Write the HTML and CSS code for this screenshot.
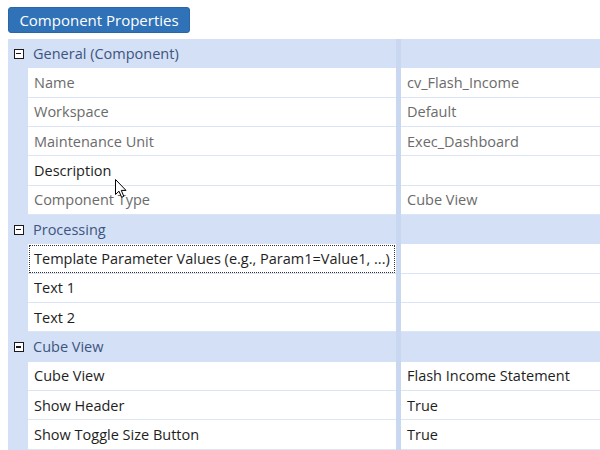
FILE: index.html
```html
<!DOCTYPE html>
<html>
<head>
<meta charset="utf-8">
<link rel="stylesheet" href="styles.css">
</head>
<body>
<div class="page">
  <div class="toolbar"><button class="title-btn">Component Properties</button></div>
  <div class="grid">
    <div class="row cat"><span class="toggle"><span class="minus"></span></span><span class="cat-label">General (Component)</span><span class="div"></span><span class="cat-fill"></span></div>
    <div class="row item"><span class="gut"></span><span class="name ro">Name</span><span class="div"></span><span class="val ro">cv_Flash_Income</span></div>
    <div class="row item"><span class="gut"></span><span class="name ro">Workspace</span><span class="div"></span><span class="val ro">Default</span></div>
    <div class="row item"><span class="gut"></span><span class="name ro">Maintenance Unit</span><span class="div"></span><span class="val ro">Exec_Dashboard</span></div>
    <div class="row item"><span class="gut"></span><span class="name">Description</span><span class="div"></span><span class="val"></span></div>
    <div class="row item"><span class="gut"></span><span class="name ro">Component Type</span><span class="div"></span><span class="val ro">Cube View</span></div>
    <div class="row cat"><span class="toggle"><span class="minus"></span></span><span class="cat-label">Processing</span><span class="div"></span><span class="cat-fill"></span></div>
    <div class="row item"><span class="gut"></span><span class="name focus">Template Parameter Values (e.g., Param1=Value1, ...)</span><span class="div"></span><span class="val"></span></div>
    <div class="row item"><span class="gut"></span><span class="name">Text 1</span><span class="div"></span><span class="val"></span></div>
    <div class="row item"><span class="gut"></span><span class="name">Text 2</span><span class="div"></span><span class="val"></span></div>
    <div class="row cat"><span class="toggle"><span class="minus"></span></span><span class="cat-label">Cube View</span><span class="div"></span><span class="cat-fill"></span></div>
    <div class="row item"><span class="gut"></span><span class="name">Cube View</span><span class="div"></span><span class="val">Flash Income Statement</span></div>
    <div class="row item"><span class="gut"></span><span class="name">Show Header</span><span class="div"></span><span class="val">True</span></div>
    <div class="row item"><span class="gut"></span><span class="name">Show Toggle Size Button</span><span class="div"></span><span class="val">True</span></div>
  </div>
  <svg class="cursor" width="13" height="20" viewBox="0 0 13 20"><path d="M0.5 0.5 L0.5 15.5 L4 12.2 L6.6 18.3 L8.8 17.4 L6.3 11.4 L11 11.4 Z" fill="#fff" stroke="#000" stroke-width="1" stroke-linejoin="miter"/></svg>
</div>
</body>
</html>
```
FILE: styles.css
```css
html, body {
  margin: 0;
  padding: 0;
  background: #ffffff;
  overflow: hidden;
}
body {
  font-family: "Open Sans", "Noto Sans", sans-serif;
  font-size: 14.5px;
}
.page {
  position: relative;
  width: 600px;
  height: 450px;
  padding-left: 8px;
  box-sizing: border-box;
}
.toolbar {
  height: 39px;
  padding-top: 7px;
  box-sizing: border-box;
}
.title-btn {
  display: block;
  width: 182px;
  height: 26px;
  border: 1px solid #2a66a8;
  border-radius: 3px;
  background: #3072b8;
  color: #ffffff;
  font-family: "Open Sans", "Noto Sans", sans-serif;
  font-size: 15px;
  font-weight: 500;
  padding: 0;
  line-height: 24px;
}
.grid {
  display: flex;
  flex-direction: column;
  background: #d4e0f5;
}
.row {
  display: grid;
  grid-template-columns: 20px 368px 5px 1fr;
  height: 29.33px;
  align-items: stretch;
}
.cat {
  background: #d4e0f5;
}
.toggle {
  display: flex;
  align-items: center;
  justify-content: center;
  padding-left: 1px;
}
.minus {
  width: 8px;
  height: 8px;
  border: 1.5px solid #1a1a1a;
  position: relative;
  background: #fff;
}
.minus::after {
  content: "";
  position: absolute;
  left: 1.5px;
  right: 1.5px;
  top: 3.25px;
  height: 1.5px;
  background: #1a1a1a;
}
.cat-label {
  display: flex;
  align-items: center;
  padding-left: 5px;
  color: #3c5580;
}
.div {
  background: #c9d7f0;
}
.item .gut {
  background: #d4e0f5;
}
.name, .val {
  background: #ffffff;
  border-bottom: 1px solid #dbe5f6;
  display: flex;
  align-items: center;
  color: #1e1e1e;
  white-space: nowrap;
  overflow: hidden;
}
.name {
  padding-left: 6px;
}
.val {
  padding-left: 6px;
}
.ro {
  color: #6b6b6b;
}
.focus {
  outline: 1px dotted #333;
  outline-offset: -2px;
}
.cursor {
  position: absolute;
  left: 115px;
  top: 179px;
}
```
